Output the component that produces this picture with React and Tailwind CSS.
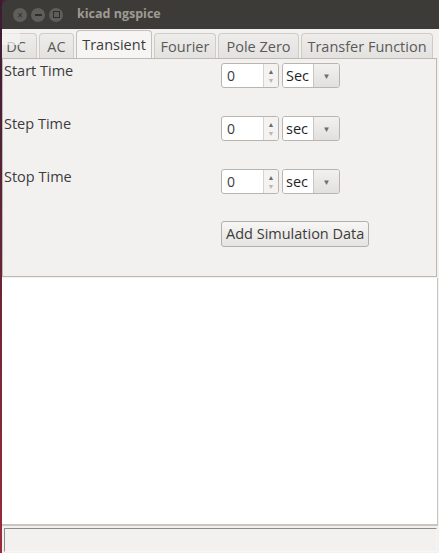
import React from "react";

const font = { fontFamily: '"Open Sans", "Noto Sans", sans-serif' };

function SpinBox() {
  return (
    <div className="flex h-[25px] w-[58px] rounded-[3px] border border-[#b8b5b0] bg-white overflow-hidden">
      <div className="flex-1 pl-[5px] text-[14px] leading-[23px] text-[#3c3c3c]">0</div>
      <div className="flex w-[15px] flex-col items-center justify-center border-l border-[#d6d3ce] bg-[#f4f3f2]">
        <span className="text-[7px] leading-[9px] text-[#6b6a67]">▲</span>
        <span className="text-[7px] leading-[9px] text-[#b9b7b3]">▼</span>
      </div>
    </div>
  );
}

function Combo({ label }) {
  return (
    <div className="flex h-[25px] w-[58px] rounded-[3px] border border-[#b8b5b0] overflow-hidden">
      <div className="w-[30px] bg-white pl-[3px] text-[14.5px] leading-[23px] text-[#1f1f1f]">{label}</div>
      <div className="flex flex-1 items-center justify-center border-l border-[#c9c6c1] bg-gradient-to-b from-[#f2f1f0] to-[#e2e0dd]">
        <span className="text-[8px] text-[#6f6e6b]">▼</span>
      </div>
    </div>
  );
}

function Tab({ label, active, w }) {
  if (active) {
    return (
      <div className={"mt-[1px] flex h-[29px] shrink-0 items-center justify-center rounded-t-[4px] border border-b-0 border-[#c3c0bb] bg-[#f6f5f4] text-[14.5px] text-[#3c3c3c] " + w}>
        {label}
      </div>
    );
  }
  return (
    <div
      className={
        "mt-[4px] flex h-[26px] shrink-0 items-center justify-center rounded-t-[4px] border border-b-0 border-[#cfccc7] bg-gradient-to-b from-[#eeedeb] to-[#e3e1de] text-[14.5px] text-[#5a5a5a] " +
        w
      }
    >
      {label}
    </div>
  );
}

function Row({ label, unit }) {
  return (
    <div className="flex h-[25px] items-start">
      <div className="w-[217px] text-[14.5px] leading-[16px] text-[#3c3c3c]">{label}</div>
      <div className="flex gap-[3px]">
        <SpinBox />
        <Combo label={unit} />
      </div>
    </div>
  );
}

export default function App() {
  return (
    <div className="flex h-[553px] w-[439px] bg-[#4a1f3a]" style={font}>
      <div className="w-[2px] bg-gradient-to-b from-[#3b1b33] via-[#6a2536] to-[#9b2a3a]" />
      <div className="flex flex-1 flex-col">
        {/* title bar */}
        <div className="flex h-[29px] items-center rounded-tl-[6px] bg-[#3c3b37] pl-[11px]">
          <div className="flex gap-[4px]">
            <div className="flex h-[14px] w-[14px] items-center justify-center rounded-full bg-[#5f5e5a] text-[10px] leading-none text-[#2e2d2a]">×</div>
            <div className="flex h-[14px] w-[14px] items-center justify-center rounded-full bg-[#5f5e5a]">
              <div className="h-[2px] w-[7px] bg-[#2e2d2a]" />
            </div>
            <div className="flex h-[14px] w-[14px] items-center justify-center rounded-full bg-[#5f5e5a]">
              <div className="h-[7px] w-[7px] border border-[#2e2d2a]" />
            </div>
          </div>
          <div className="ml-[14px] text-[12.5px] font-bold text-[#9f9b93]">kicad ngspice</div>
        </div>

        <div className="flex flex-1 flex-col bg-[#f2f1f0]">
          {/* tabs */}
          <div className="flex h-[29px] items-start gap-[2px] overflow-hidden bg-[#f2f1f0]">
            <div className="relative flex w-[35px] shrink-0 justify-end overflow-hidden">
              <Tab label="DC" w="w-[42px]" />
              <div className="absolute left-0 top-0 h-[16px] w-[18px] bg-[#f4f3f2]/70" />
            </div>
            <Tab label="AC" w="w-[35px]" />
            <Tab label="Transient" active w="w-[76px]" />
            <Tab label="Fourier" w="w-[62px]" />
            <Tab label="Pole Zero" w="w-[81px]" />
            <Tab label="Transfer Function" w="w-[132px]" />
          </div>

          {/* panel */}
          <div className="mr-[2px] flex h-[219px] flex-col gap-[28px] border border-[#bdbab5] bg-[#f2f1f0] pl-[1px] pt-[4px]">
            <Row label="Start Time" unit="Sec" />
            <Row label="Step Time" unit="sec" />
            <Row label="Stop Time" unit="sec" />
            <div className="-mt-[1px] flex">
              <div className="w-[217px]" />
              <button className="h-[26px] rounded-[3px] border border-[#b3b0ab] bg-gradient-to-b from-[#f7f6f5] to-[#e6e4e1] px-[4px] text-[14.5px] text-[#3c3c3c]">
                Add Simulation Data
              </button>
            </div>
          </div>

          {/* output area */}
          <div className="mr-[1px] mt-[1px] h-[248px] border-r border-b-2 border-[#c9c6c1] bg-white" />

          {/* status bar */}
          <div className="mx-[2px] mt-[2px] h-[24px] border border-[#8e8c88] border-b-[#f7f6f5] border-r-[#f7f6f5] bg-[#f2f1f0]" />
        </div>
      </div>
    </div>
  );
}
